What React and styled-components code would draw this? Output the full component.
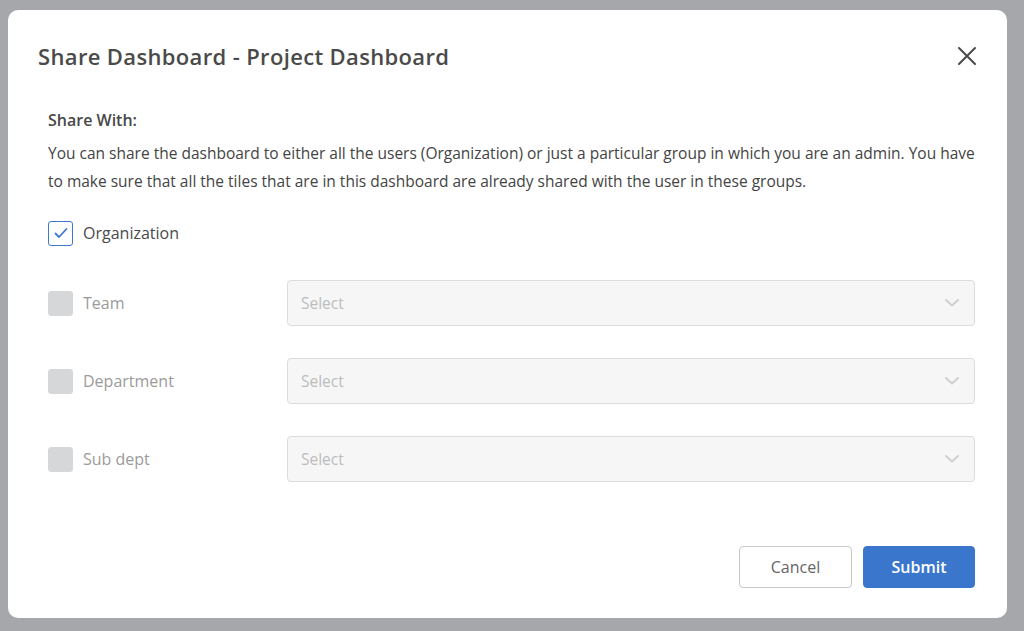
import React, { useState } from 'react';
import styled, { createGlobalStyle } from 'styled-components';

const GlobalStyle = createGlobalStyle`
  html, body {
    margin: 0;
    padding: 0;
    height: 100%;
  }
  body {
    font-family: 'Open Sans', 'Liberation Sans', sans-serif;
    background: #a6a7aa;
    overflow: hidden;
  }
`;

const Overlay = styled.div`
  width: 1024px;
  height: 631px;
  box-sizing: border-box;
  padding: 10px 17px 13px 8px;
  background: #a6a7aa;
`;

const Modal = styled.div`
  height: 100%;
  box-sizing: border-box;
  background: #fff;
  border-radius: 10px;
  display: flex;
  flex-direction: column;
  padding: 30px 31px 30px 30px;
`;

const Header = styled.div`
  display: flex;
  align-items: center;
  justify-content: space-between;
  height: 32px;
`;

const Title = styled.h2`
  margin: 0;
  font-size: 22px;
  font-weight: 600;
  color: #4a4a4a;
  letter-spacing: 0.35px;
`;

const CloseButton = styled.button`
  border: none;
  background: none;
  padding: 0;
  width: 24px;
  height: 24px;
  display: flex;
  align-items: center;
  justify-content: center;
  cursor: pointer;
  margin-right: -3px;
`;

const Body = styled.div`
  padding: 0 1px 0 10px;
  margin-top: 37px;
  flex: 1;
`;

const SectionLabel = styled.div`
  font-size: 16px;
  font-weight: 600;
  color: #484848;
  line-height: 22px;
`;

const Description = styled.p`
  margin: 8px 0 0;
  font-size: 15.5px;
  line-height: 28px;
  color: #444;
`;

const OrgRow = styled.label`
  display: flex;
  align-items: center;
  gap: 10px;
  margin-top: 25px;
  height: 26px;
  cursor: pointer;
`;

const GroupList = styled.div`
  display: flex;
  flex-direction: column;
  gap: 32px;
  margin-top: 34px;
`;

const GroupRow = styled.div`
  display: grid;
  grid-template-columns: 239px 1fr;
  align-items: center;
`;

const CheckLabel = styled.div`
  display: flex;
  align-items: center;
  gap: 10px;
`;

const Box = styled.span`
  width: 25px;
  height: 25px;
  box-sizing: border-box;
  border-radius: 3px;
  display: flex;
  align-items: center;
  justify-content: center;
  border: 1px solid ${p => (p.$checked ? '#3d78cf' : '#d6d7d9')};
  background: ${p => (p.$disabled ? '#d6d7d9' : '#fff')};
`;

const LabelText = styled.span`
  font-size: 16px;
  color: ${p => (p.$disabled ? '#9b9b9b' : '#4a4a4a')};
`;

const SelectBox = styled.div`
  height: 46px;
  box-sizing: border-box;
  border: 1px solid #dcdcdc;
  border-radius: 4px;
  background: #f6f6f6;
  display: flex;
  align-items: center;
  justify-content: space-between;
  padding: 0 14px 0 13px;
`;

const Placeholder = styled.span`
  font-size: 15.5px;
  color: #bdbdbd;
`;

const Footer = styled.div`
  display: flex;
  justify-content: flex-end;
  gap: 11px;
  padding-right: 1px;
`;

const Button = styled.button`
  height: 42px;
  width: ${p => p.$w}px;
  box-sizing: border-box;
  border-radius: 4px;
  font-family: 'Open Sans', 'Liberation Sans', sans-serif;
  font-size: 16px;
  cursor: pointer;
  border: 1px solid ${p => (p.$primary ? '#3b76cd' : '#c9c9c9')};
  background: ${p => (p.$primary ? '#3b76cd' : '#fff')};
  color: ${p => (p.$primary ? '#fff' : '#666')};
  font-weight: ${p => (p.$primary ? 600 : 400)};
`;

const Chevron = () => (
  <svg width="16" height="10" viewBox="0 0 16 10" fill="none">
    <path d="M2 2l6 5.5L14 2" stroke="#cfcfcf" strokeWidth="2" strokeLinecap="round" strokeLinejoin="round" />
  </svg>
);

const groups = ['Team', 'Department', 'Sub dept'];

export default function App() {
  const [org, setOrg] = useState(true);

  return (
    <>
      <GlobalStyle />
      <Overlay>
        <Modal>
          <Header>
            <Title>Share Dashboard - Project Dashboard</Title>
            <CloseButton aria-label="Close">
              <svg width="20" height="20" viewBox="0 0 20 20">
                <path d="M2 2l16 16M18 2L2 18" stroke="#4a4a4a" strokeWidth="2" strokeLinecap="round" />
              </svg>
            </CloseButton>
          </Header>
          <Body>
            <SectionLabel>Share With:</SectionLabel>
            <Description>
              You can share the dashboard to either all the users (Organization) or just a particular group in which you are an admin. You have to make sure that all the tiles that are in this dashboard are already shared with the user in these groups.
            </Description>
            <OrgRow onClick={() => setOrg(!org)}>
              <Box $checked={org}>
                {org && (
                  <svg width="16" height="16" viewBox="0 0 16 16" fill="none">
                    <path d="M2.5 8.5l3.5 3.5 7.5-8" stroke="#3d78cf" strokeWidth="1.8" strokeLinecap="round" strokeLinejoin="round" />
                  </svg>
                )}
              </Box>
              <LabelText>Organization</LabelText>
            </OrgRow>
            <GroupList>
              {groups.map(g => (
                <GroupRow key={g}>
                  <CheckLabel>
                    <Box $disabled />
                    <LabelText $disabled>{g}</LabelText>
                  </CheckLabel>
                  <SelectBox>
                    <Placeholder>Select</Placeholder>
                    <Chevron />
                  </SelectBox>
                </GroupRow>
              ))}
            </GroupList>
          </Body>
          <Footer>
            <Button $w={113}>Cancel</Button>
            <Button $w={112} $primary>Submit</Button>
          </Footer>
        </Modal>
      </Overlay>
    </>
  );
}
